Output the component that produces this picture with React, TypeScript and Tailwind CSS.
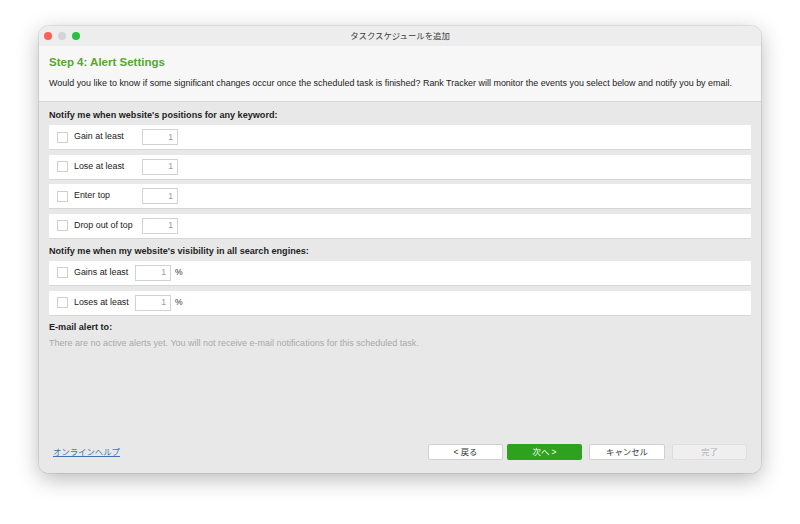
import React from "react";

const FONT = { fontFamily: '"Liberation Sans", "Noto Sans CJK JP", sans-serif' };

type Row = { label: string; labelW: number; percent?: boolean };

const KEYWORD_ROWS: Row[] = [
  { label: "Gain at least", labelW: 68 },
  { label: "Lose at least", labelW: 68 },
  { label: "Enter top", labelW: 68 },
  { label: "Drop out of top", labelW: 68 },
];

const VISIBILITY_ROWS: Row[] = [
  { label: "Gains at least", labelW: 61, percent: true },
  { label: "Loses at least", labelW: 61, percent: true },
];

function AlertRow({ row }: { row: Row }) {
  return (
    <div className="flex h-[24px] items-center bg-white shadow-[0_1px_0_#d6d6d6] pl-[8px]">
      <span className="h-[11px] w-[11px] shrink-0 border border-[#cfcfcf] bg-white" />
      <span className="ml-[6px] text-[8.9px] text-[#222]" style={{ width: row.labelW }}>
        {row.label}
      </span>
      <span className="flex h-[16px] w-[36px] items-center justify-end border border-[#d2d2d2] bg-white pr-[4px] text-[8.6px] text-[#9a9a9a]">
        1
      </span>
      {row.percent ? <span className="ml-[4px] text-[8.6px] text-[#333]">%</span> : null}
    </div>
  );
}

export default function App() {
  return (
    <div className="h-[524px] w-[800px] bg-white pl-[39px] pt-[26px]" style={FONT}>
      <div className="flex h-[447px] w-[722px] flex-col overflow-hidden rounded-[10px] shadow-[0_6px_22px_rgba(0,0,0,0.28),0_0_0_1px_rgba(0,0,0,0.08)]">
        {/* title bar */}
        <div className="relative flex h-[20px] shrink-0 items-center bg-[#ededed] pl-[5px]">
          <div className="flex gap-[6px]">
            <span className="h-[8px] w-[8px] rounded-full bg-[#fe5f57]" />
            <span className="h-[8px] w-[8px] rounded-full bg-[#d4d4d4]" />
            <span className="h-[8px] w-[8px] rounded-full bg-[#29c13f]" />
          </div>
          <div className="absolute inset-0 flex items-center justify-center text-[8.4px] text-[#3a3a3a]">
            タスクスケジュールを追加
          </div>
        </div>

        {/* header */}
        <div className="h-[56px] shrink-0 border-b border-[#d9d9d9] bg-[#f7f7f7] px-[10px] pt-[9px]">
          <div className="text-[11.5px] font-bold leading-[14px] text-[#55a82b]">Step 4: Alert Settings</div>
          <div className="mt-[8px] text-[8.95px] leading-[12px] text-[#222]">
            Would you like to know if some significant changes occur once the scheduled task is finished? Rank
            Tracker will monitor the events you select below and notify you by email.
          </div>
        </div>

        {/* body */}
        <div className="flex flex-1 flex-col bg-[#e8e8e8] px-[10px]">
          <div className="h-[23px] pt-[7px] text-[9.1px] font-bold leading-[12px] text-[#1e1e1e]">
            Notify me when website's positions for any keyword:
          </div>
          <div className="flex flex-col gap-[5.5px]">
            {KEYWORD_ROWS.map((r) => (
              <AlertRow key={r.label} row={r} />
            ))}
          </div>
          <div className="h-[23px] pt-[7px] text-[9.1px] font-bold leading-[12px] text-[#1e1e1e]">
            Notify me when my website's visibility in all search engines:
          </div>
          <div className="flex flex-col gap-[6px]">
            {VISIBILITY_ROWS.map((r) => (
              <AlertRow key={r.label} row={r} />
            ))}
          </div>
          <div className="mt-[6px] text-[9.1px] font-bold leading-[12px] text-[#1e1e1e]">E-mail alert to:</div>
          <div className="mt-[4px] text-[9px] leading-[12px] text-[#a8a8a8]">
            There are no active alerts yet. You will not receive e-mail notifications for this scheduled task.
          </div>

          {/* footer */}
          <div className="mt-auto flex h-[42px] items-start pt-[13px]">
            <a className="ml-[4px] mt-[2px] text-[8.4px] text-[#3b72b5] underline">オンラインヘルプ</a>
            <div className="ml-auto mr-[4px] flex">
              <button className="h-[16px] w-[75px] rounded-[2px] border border-[#d0d0d0] bg-white text-[8.4px] text-[#333]">
                &lt; 戻る
              </button>
              <button className="ml-[4px] h-[16px] w-[75px] rounded-[2px] bg-[#2ea11f] text-[8.4px] text-white">
                次へ &gt;
              </button>
              <button className="ml-[7px] h-[16px] w-[76px] rounded-[2px] border border-[#d0d0d0] bg-white text-[8.4px] text-[#333]">
                キャンセル
              </button>
              <button className="ml-[7px] h-[16px] w-[75px] rounded-[2px] border border-[#dedede] bg-[#efefef] text-[8.4px] text-[#b0b0b0]">
                完了
              </button>
            </div>
          </div>
        </div>
      </div>
    </div>
  );
}
